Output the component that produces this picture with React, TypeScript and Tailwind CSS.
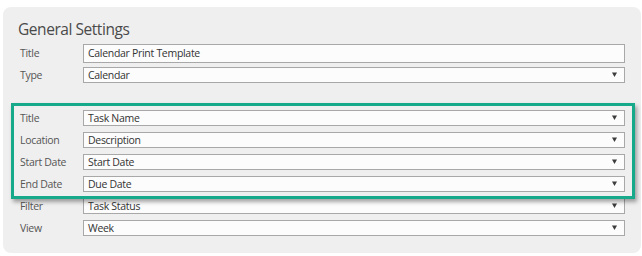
const font = { fontFamily: '"Open Sans", "Noto Sans", sans-serif' };

function Arrow() {
  return (
    <svg width="7" height="6" viewBox="0 0 7 6" className="shrink-0">
      <path d="M1 0.5h5L3.5 5z" fill="#3c3c3c" />
    </svg>
  );
}

function Row({ label, value, select = true, tall = false }: { label: string; value: string; select?: boolean; tall?: boolean }) {
  return (
    <div className="flex h-[22px] items-center">
      <div className="w-[63px] text-[10.5px] leading-none tracking-[-0.3px] text-[#555]">{label}</div>
      <div
        className={`flex w-[542px] items-center justify-between border border-[#a8a8a8] bg-[#fcfcfc] pl-[4px] pr-[6px] text-[10.5px] tracking-[-0.3px] text-[#333] ${
          tall ? "h-[19px]" : "h-[16px]"
        }`}
      >
        <span className="leading-none">{value}</span>
        {select && <Arrow />}
      </div>
    </div>
  );
}

export default function App() {
  return (
    <div className="h-[256px] w-[642px] bg-white pl-[3px] pt-[7px]" style={font}>
      <div className="relative h-[246px] w-[638px] rounded-[8px] bg-[#efefef] pl-[17px]">
        <div className="ml-[-2px] pt-[11px] text-[15.5px] leading-[22px] tracking-[-0.45px] text-[#4a4a4a]">General Settings</div>
        <div className="mt-[2px] flex flex-col">
          <Row label="Title" value="Calendar Print Template" select={false} tall />
          <Row label="Type" value="Calendar" />
          <div className="h-[21px]" />
          <Row label="Title" value="Task Name" />
          <Row label="Location" value="Description" />
          <Row label="Start Date" value="Start Date" />
          <Row label="End Date" value="Due Date" />
          <Row label="Filter" value="Task Status" />
          <Row label="View" value="Week" />
        </div>
        <div className="pointer-events-none absolute left-[8px] top-[96px] h-[96px] w-[624px] border-[3px] border-[#16a98a] shadow-[2px_3px_4px_rgba(0,0,0,0.35)]" />
      </div>
    </div>
  );
}
